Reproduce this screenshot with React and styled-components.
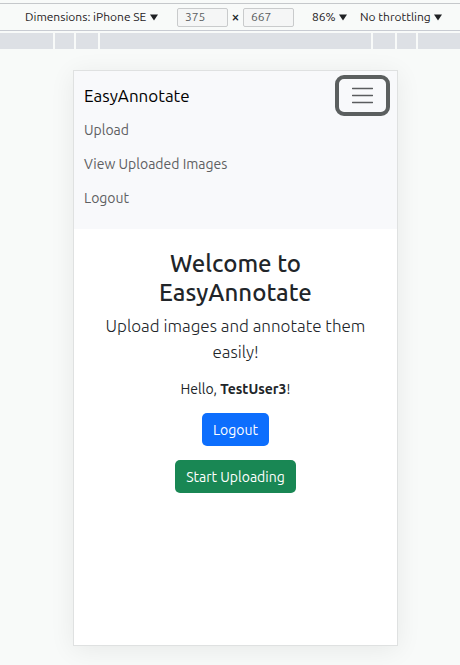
import React, { useState } from "react";
import styled, { createGlobalStyle } from "styled-components";

const GlobalStyle = createGlobalStyle`
  *, *::before, *::after { box-sizing: border-box; }
  body {
    margin: 0;
    background: #f8faf9;
    color: #212529;
    font-family: Ubuntu, "Noto Sans", sans-serif;
    font-size: 14px;
    line-height: 20px;
  }
  button, input, select { font: inherit; color: inherit; }
`;

const Page = styled.div`
  min-height: 100vh;
  display: flex;
  flex-direction: column;
`;

const Toolbar = styled.header`
  display: flex;
  align-items: center;
  height: 28px;
  margin-top: 3px;
  padding-left: 25px;
  border-top: 1px solid #c5c8cb;
  border-bottom: 1px solid #c8cbd2;
  font-size: 12px;
  white-space: nowrap;
`;

const Picker = styled.label`
  display: flex;
  align-items: center;
  gap: 3px;
  margin-right: ${({ $after }) => $after}px;
`;

const PickerSelect = styled.select`
  appearance: none;
  width: ${({ $width }) => $width}px;
  padding: 0;
  border: 0;
  background: transparent;
  color: #1f2124;
  line-height: 18px;
`;

const SizeInput = styled.input`
  width: 51px;
  height: 19px;
  padding: 0 7px;
  border: 1px solid #c9cbcc;
  border-radius: 2px;
  background: #f5f6f6;
  color: #5b5e61;
`;

const Times = styled.span`
  width: 15px;
  text-align: center;
  font-size: 14px;
  font-weight: 500;
`;

const ZoomGroup = styled.div`
  display: flex;
  margin-left: 18px;
`;

const Ruler = styled.div`
  display: flex;
  gap: 2px;
  height: 16px;
  margin-top: 2px;
`;

const RulerPart = styled.div`
  flex: ${({ $flex }) => $flex};
  background: #dde0e5;
`;

const Stage = styled.main`
  display: flex;
  flex: 1;
  justify-content: center;
  padding: 21px 12px 19px 23px;
`;

const Device = styled.div`
  width: 100%;
  max-width: 325px;
  border: 1px solid #dfe1e1;
  background: #fff;
  box-shadow: 0 4px 24px rgba(0, 0, 0, 0.07);
`;

const Navbar = styled.nav`
  padding: 4px 7px 11px 10px;
  background: #f8f9fb;
`;

const NavHead = styled.div`
  display: flex;
  align-items: center;
  justify-content: space-between;
`;

const Brand = styled.a`
  color: #000;
  font-size: 17px;
  line-height: 24px;
  text-decoration: none;
`;

const Toggler = styled.button`
  display: grid;
  place-items: center;
  width: 55px;
  height: 41px;
  padding: 0;
  border: 4px solid #5b5f5f;
  border-radius: 9px;
  background: transparent;
`;

const NavList = styled.ul`
  margin: 0;
  padding: 0;
  list-style: none;
`;

const NavLink = styled.a`
  display: block;
  padding: 4px 0 10px;
  color: #5e6062;
  text-decoration: none;
`;

const Hero = styled.section`
  display: flex;
  flex-direction: column;
  align-items: center;
  padding: 20px;
  text-align: center;
`;

const Title = styled.h1`
  max-width: 200px;
  margin: 0 0 6px;
  font-size: 24px;
  font-weight: 500;
  line-height: 29px;
`;

const Lead = styled.p`
  margin: 0 0 14px;
  font-size: 17px;
  font-weight: 300;
  line-height: 26px;
`;

const Greeting = styled.p`
  margin: 0 0 14px;
`;

const Action = styled.button`
  height: 33px;
  margin-bottom: 14px;
  padding: 0 11px;
  border: 0;
  border-radius: 5px;
  background: ${({ $color }) => $color};
  color: #fff;
`;

function Arrow() {
  return (
    <svg width="8" height="7" viewBox="0 0 8 7" aria-hidden="true">
      <path d="M0 0.5H8L4 6.5Z" fill="#1f2124" />
    </svg>
  );
}

function Dropdown({ label, value, width, after }) {
  return (
    <Picker $after={after}>
      <PickerSelect aria-label={label} $width={width}>
        <option>{value}</option>
      </PickerSelect>
      <Arrow />
    </Picker>
  );
}

const rulerParts = ["53 1 0", "0 1 19px", "0 1 22px", "0 1 271px", "0 1 22px", "0 1 19px", "42 1 0"];
const links = ["Upload", "View Uploaded Images", "Logout"];

export default function App() {
  const [open, setOpen] = useState(true);
  return (
    <Page>
      <GlobalStyle />
      <Toolbar>
        <Dropdown label="Device" value="Dimensions: iPhone SE" width={122} after={19} />
        <SizeInput aria-label="Width" defaultValue="375" />
        <Times>×</Times>
        <SizeInput aria-label="Height" defaultValue="667" />
        <ZoomGroup>
          <Dropdown label="Zoom" value="86%" width={24} after={13} />
          <Dropdown label="Throttling" value="No throttling" width={71} after={0} />
        </ZoomGroup>
      </Toolbar>
      <Ruler>
        {rulerParts.map((flex, i) => <RulerPart key={i} $flex={flex} />)}
      </Ruler>
      <Stage>
        <Device>
          <Navbar>
            <NavHead>
              <Brand href="#">EasyAnnotate</Brand>
              <Toggler aria-label="Toggle navigation" aria-expanded={open} onClick={() => setOpen(!open)}>
                <svg width="21" height="17" viewBox="0 0 21 17" aria-hidden="true">
                  <path d="M0.5 1.5H20.5M0.5 8.5H20.5M0.5 15.5H20.5" stroke="#5a5c5e" strokeWidth="1.5" strokeLinecap="round" />
                </svg>
              </Toggler>
            </NavHead>
            {open && (
              <NavList>
                {links.map((text) => <li key={text}><NavLink href="#">{text}</NavLink></li>)}
              </NavList>
            )}
          </Navbar>
          <Hero>
            <Title>Welcome to EasyAnnotate</Title>
            <Lead>Upload images and annotate them easily!</Lead>
            <Greeting>Hello, <strong>TestUser3</strong>!</Greeting>
            <Action $color="#0d6efd">Logout</Action>
            <Action $color="#198754">Start Uploading</Action>
          </Hero>
        </Device>
      </Stage>
    </Page>
  );
}
